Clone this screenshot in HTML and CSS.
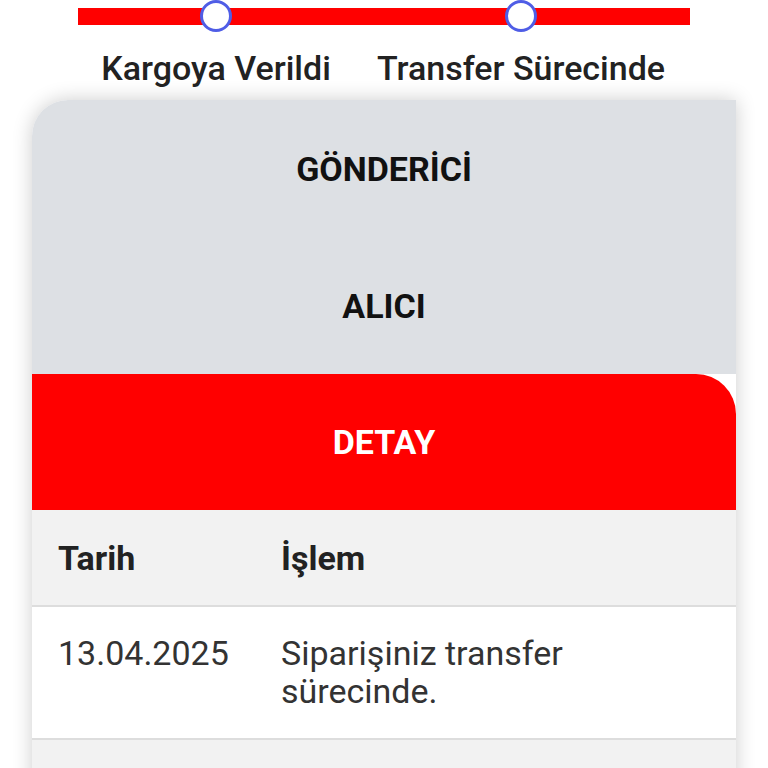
FILE: index.html
```html
<!DOCTYPE html>
<html lang="tr">
<head>
<meta charset="utf-8">
<link rel="stylesheet" href="styles.css">
</head>
<body>
<div class="progress">
  <div class="track">
    <span class="dot dot1"></span>
    <span class="dot dot2"></span>
  </div>
  <div class="labels">
    <span class="lbl lbl1">Kargoya Verildi</span>
    <span class="lbl lbl2">Transfer Sürecinde</span>
  </div>
</div>
<div class="card">
  <div class="tab">GÖNDERİCİ</div>
  <div class="tab">ALICI</div>
  <div class="tab active">DETAY</div>
  <div class="table">
    <div class="row head">
      <div class="c1">Tarih</div>
      <div class="c2">İşlem</div>
    </div>
    <div class="row">
      <div class="c1">13.04.2025</div>
      <div class="c2">Siparişiniz transfer sürecinde.</div>
    </div>
    <div class="row alt"></div>
  </div>
</div>
</body>
</html>
```
FILE: styles.css
```css
html, body {
  margin: 0;
  padding: 0;
  background: #ffffff;
  font-family: Roboto, "Noto Sans", sans-serif;
  overflow: hidden;
  height: 768px;
}
.progress {
  position: relative;
  height: 100px;
}
.track {
  position: absolute;
  left: 78px;
  top: 8px;
  width: 612px;
  height: 17px;
  background: #ff0000;
}
.dot {
  position: absolute;
  top: -8px;
  width: 26px;
  height: 26px;
  border: 3px solid #4f5de6;
  border-radius: 50%;
  background: #ffffff;
}
.dot1 { left: 122px; }
.dot2 { left: 427px; }
.labels {
  position: absolute;
  top: 46px;
  left: 0;
  width: 768px;
  height: 44px;
}
.lbl {
  position: absolute;
  top: 0;
  font-size: 34px;
  font-weight: 500;
  color: #222222;
  transform: translateX(-50%);
  white-space: nowrap;
  line-height: 44px;
}
.lbl1 { left: 216px; }
.lbl2 { left: 521px; }
.card {
  margin-left: 32px;
  width: 704px;
  background: #ffffff;
  border-top-left-radius: 36px;
  box-shadow: 0 0 20px rgba(0,0,0,0.2);
  overflow: hidden;
}
.tab {
  height: 137px;
  display: flex;
  align-items: center;
  justify-content: center;
  background: #dde0e4;
  color: #111111;
  font-size: 34px;
  font-weight: 700;
}
.tab.active {
  background: #ff0000;
  color: #ffffff;
  border-top-right-radius: 40px;
  height: 136px;
}
.row {
  display: grid;
  grid-template-columns: 223px 1fr;
  padding-left: 26px;
  border-bottom: 2px solid #dddddd;
  font-size: 34px;
  color: #333333;
  line-height: 38px;
}
.row.head {
  background: #f2f2f2;
  height: 95px;
  align-items: center;
  font-weight: 700;
  color: #222222;
}
.row:not(.head):not(.alt) {
  background: #ffffff;
  padding-top: 27px;
  padding-bottom: 28px;
  height: 76px;
}
.row.alt {
  background: #f2f2f2;
  height: 100px;
  border-bottom: 0;
}
.c2 {
  padding-right: 120px;
}
```
